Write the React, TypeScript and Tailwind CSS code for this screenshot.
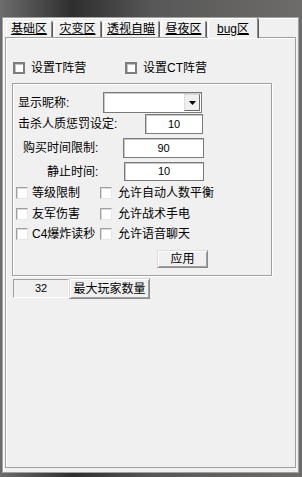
import React from "react";

function Tab({ label, className, active }: { label: string; className: string; active?: boolean }) {
  return (
    <div
      className={
        "flex items-end justify-center border-l border-t border-white border-r border-r-[#8a8a8a] rounded-t-[2px] shadow-[1px_0_0_#5a5a5a] " +
        className +
        (active ? " h-[20px] -mb-px relative z-10 bg-[#f0f0f0] pb-[2px]" : " h-[16px] pb-[1px]")
      }
    >
      <span className="leading-[14px] underline underline-offset-[1px] decoration-1">{label}</span>
    </div>
  );
}

function Box3D() {
  return <div className="w-[12px] h-[12px] shrink-0 border-2 border-[#7d7d7d] bg-white shadow-[inset_1px_1px_0_#c4c4c4]" />;
}

function FlatBox() {
  return <div className="w-[12px] h-[12px] shrink-0 border border-[#a0a0a0] border-b-[#e6e6e6] border-r-[#e6e6e6] bg-white shadow-[inset_1px_1px_0_#dadada]" />;
}

function Input({ value, className }: { value: string; className: string }) {
  return (
    <div
      className={
        "flex items-center justify-center bg-white border border-[#7a7a7a] shadow-[inset_1px_1px_0_#c8c8c8] font-['Liberation_Sans',sans-serif] text-[11px] leading-none " +
        className
      }
    >
      {value}
    </div>
  );
}

function Check({ label, first }: { label: string; first?: boolean }) {
  return (
    <div className={"flex items-center " + (first ? "w-[84px]" : "")}>
      <FlatBox />
      <span className={"leading-[14px] " + (first ? "ml-[4px]" : "ml-[6px]")}>{label}</span>
    </div>
  );
}

export default function App() {
  return (
    <div className="w-[302px] h-[477px] overflow-hidden bg-[linear-gradient(90deg,#6c6c6c_0%,#2e2e2e_24%,#575757_50%,#6e6c6a_100%)] font-['Liberation_Sans','Noto_Sans_CJK_SC',sans-serif] text-[12px] text-black">
      <div className="pt-[17px] pl-[2px]">
        <div className="w-[297px] h-[456px] border border-[#a0a0a0] bg-[#f0f0f0] shadow-[inset_1px_1px_0_#fff] flex flex-col">
          {/* tabs */}
          <div className="h-[19px] flex items-end pl-[3px] gap-[2px]">
            <Tab label="基础区" className="w-[46px]" />
            <Tab label="灾变区" className="w-[47px]" />
            <Tab label="透视自瞄" className="w-[56px]" />
            <Tab label="昼夜区" className="w-[45px]" />
            <Tab label="bug区" className="w-[50px]" active />
          </div>
          {/* page */}
          <div className="ml-[2px] w-[291px] h-[431px] border border-[#a0a0a0] shadow-[inset_1px_1px_0_#fff] flex flex-col pl-[6px]">
            <div className="mt-[24px] h-[12px] flex items-center pl-[1px]">
              <div className="w-[112px] flex items-center">
                <Box3D />
                <span className="ml-[6px] leading-[14px]">设置T阵营</span>
              </div>
              <div className="flex items-center">
                <Box3D />
                <span className="ml-[6px] leading-[14px]">设置CT阵营</span>
              </div>
            </div>

            {/* group box */}
            <div className="mt-[9px] w-[260px] h-[193px] border border-[#a0a0a0] shadow-[inset_1px_1px_0_#fff,1px_1px_0_#fff] flex flex-col pl-[5px]">
              <div className="mt-[8px] h-[21px] flex items-center">
                <span className="w-[85px] leading-[14px]">显示昵称:</span>
                <div className="w-[99px] h-[21px] bg-white border border-[#7a7a7a] shadow-[inset_1px_1px_0_#c8c8c8] flex items-center justify-end pr-[1px]">
                  <div className="w-[16px] h-[17px] bg-[#f0f0f0] border border-[#dcdcdc] border-r-[#6a6a6a] border-b-[#6a6a6a] flex items-center justify-center">
                    <svg width="7" height="4" viewBox="0 0 7 4">
                      <path d="M0 0H7L3.5 4Z" fill="#000" />
                    </svg>
                  </div>
                </div>
              </div>
              <div className="mt-[1px] h-[20px] flex items-center">
                <span className="w-[127px] leading-[14px]">击杀人质惩罚设定:</span>
                <Input value="10" className="w-[58px] h-[20px]" />
              </div>
              <div className="mt-[4px] h-[20px] flex items-center pl-[5px]">
                <span className="w-[100px] leading-[14px]">购买时间限制:</span>
                <Input value="90" className="w-[81px] h-[20px]" />
              </div>
              <div className="mt-[4px] h-[19px] flex items-center pl-[29px]">
                <span className="w-[77px] leading-[14px]">静止时间:</span>
                <Input value="10" className="w-[80px] h-[19px]" />
              </div>
              <div className="ml-[-2px] mt-[6px] h-[12px] flex items-center">
                <Check label="等级限制" first />
                <Check label="允许自动人数平衡" />
              </div>
              <div className="ml-[-2px] mt-[9px] h-[12px] flex items-center">
                <Check label="友军伤害" first />
                <Check label="允许战术手电" />
              </div>
              <div className="ml-[-2px] mt-[8px] h-[12px] flex items-center">
                <Check label="C4爆炸读秒" first />
                <Check label="允许语音聊天" />
              </div>
              <div className="mt-[10px] ml-[139px] w-[51px] h-[18px] flex items-center justify-center bg-[#f0f0f0] border border-[#8a8a8a] border-t-[#dcdcdc] border-l-[#dcdcdc] shadow-[inset_1px_1px_0_#fff,inset_-1px_-1px_0_#a0a0a0]">
                <span className="leading-[14px]">应用</span>
              </div>
            </div>

            {/* bottom row */}
            <div className="mt-[2px] h-[21px] flex items-center pl-[1px]">
              <div className="w-[56px] h-[19px] flex items-center justify-center bg-[#f0f0f0] border border-[#a0a0a0] border-b-white border-r-white font-['Liberation_Sans',sans-serif] text-[11px] leading-none">
                32
              </div>
              <div className="w-[81px] h-[21px] flex items-center justify-center bg-[#f0f0f0] border border-[#8a8a8a] border-t-[#dcdcdc] border-l-[#dcdcdc] shadow-[inset_1px_1px_0_#fff,inset_-1px_-1px_0_#a0a0a0]">
                <span className="leading-[14px]">最大玩家数量</span>
              </div>
            </div>
          </div>
        </div>
      </div>
    </div>
  );
}
